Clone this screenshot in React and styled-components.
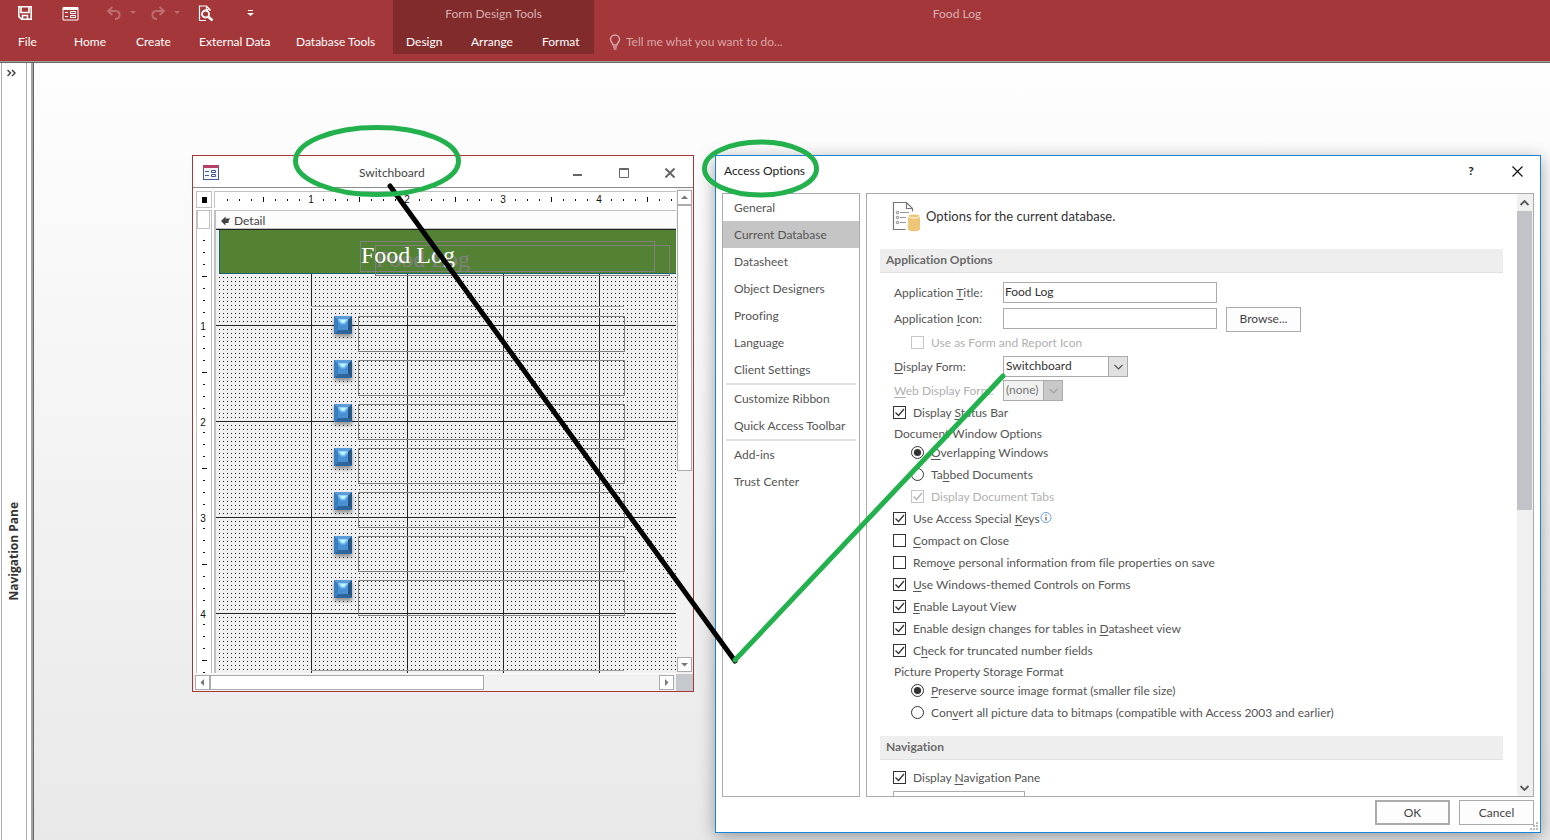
import styled, { createGlobalStyle, css } from "styled-components";

const GlobalStyle = createGlobalStyle`
  * {
    box-sizing: border-box;
  }

  body {
    margin: 0;
    font-family: Lato, "Open Sans", sans-serif;
    font-size: 12px;
    line-height: 16px;
    font-variant-ligatures: none;
    color: #444;
  }

  button, input, select {
    font: inherit;
    font-variant-ligatures: none;
    color: inherit;
  }
`;

const Page = styled.div`
  position: relative;
  display: flex;
  flex-direction: column;
  height: 100vh;
  min-height: 840px;
  overflow: hidden;
  background: #fff;
`;

/* ribbon */

const Ribbon = styled.header`
  display: flex;
  height: 63px;
  background: #a4373a;
  border-bottom: 1px solid #6b6b6b;
  box-shadow: inset 0 -1px #a09c9c;
  color: #fff;
`;

const RibbonBlock = styled.div`
  display: flex;
  flex-direction: column;
  flex: ${(p) => (p.$grow ? "1" : "none")};
  width: ${(p) => p.$width || "auto"};
`;

const ContextBlock = styled(RibbonBlock)`
  height: 54px;
  background: #812b2d;
`;

const TopRow = styled.div`
  display: flex;
  flex: none;
  align-items: center;
  height: 28px;
  color: #d9b0b1;
  justify-content: ${(p) => (p.$center ? "center" : "flex-start")};
  padding-right: ${(p) => (p.$center ? p.$inset || "0" : "0")};
`;

const QuickAccess = styled(TopRow)`
  height: 26px;
  margin-bottom: 2px;
  padding-left: 17px;
`;

const QuickButton = styled.button`
  display: flex;
  align-items: center;
  gap: 8px;
  width: ${(p) => p.$width};
  height: 24px;
  padding: 0;
  border: 0;
  background: none;
  color: ${(p) => (p.disabled ? "#bd6e70" : "#fff")};
`;

const TabRow = styled.nav`
  display: flex;
  flex: none;
  align-items: center;
  height: 28px;
  padding-left: ${(p) => p.$start};
`;

const Tab = styled.a`
  width: ${(p) => p.$width};
  color: #fff;
  white-space: nowrap;
  text-decoration: none;
`;

const TellMe = styled.label`
  display: flex;
  align-items: center;
  gap: 5px;
  height: 28px;
  padding-left: 15px;
  color: #d9a5a6;

  input {
    width: 240px;
    padding: 0;
    border: 0;
    outline: 0;
    background: none;
  }

  input::placeholder {
    color: #d9a5a6;
    opacity: 1;
  }
`;

/* work area */

const WorkArea = styled.div`
  display: flex;
  flex: 1;
`;

const NavPane = styled.aside`
  display: flex;
  flex-direction: column;
  justify-content: space-between;
  width: 26px;
  margin-left: 1px;
  padding: 3px 0 239px 2px;
  border: 1px solid #abadb3;
  border-width: 0 1px;
`;

const NavToggle = styled.button`
  display: flex;
  align-items: center;
  width: 16px;
  height: 14px;
  padding: 0 3px;
  border: 0;
  background: none;
`;

const NavTitle = styled.div`
  writing-mode: vertical-rl;
  transform: rotate(180deg);
  font-family: "Open Sans", sans-serif;
  font-weight: 700;
  line-height: 20px;
  color: #333;
`;

const Desktop = styled.main`
  position: relative;
  flex: 1;
  margin-left: 6px;
  border-left: 1px solid #666;
  box-shadow: -2px 0 #a0a3a7;
  background: linear-gradient(#fefefe, #e9e9e9);
`;

/* form design window */

const FormWindow = styled.section`
  position: absolute;
  left: 158px;
  top: 92px;
  display: flex;
  flex-direction: column;
  width: 502px;
  height: 537px;
  border: 1px solid #a4373a;
  background: #fff;
`;

const FormTitleBar = styled.div`
  display: flex;
  align-items: center;
  height: 32px;
  padding: 2px 0 0 10px;
  border-bottom: 1px solid #8c8c8c;

  h1 {
    flex: 1;
    margin: 0;
    padding-left: 140px;
    font-size: 12px;
    font-weight: 400;
  }
`;

const WindowButton = styled.button`
  display: flex;
  align-items: center;
  justify-content: center;
  width: 46px;
  height: 28px;
  padding: 0;
  border: 0;
  background: none;
  color: #222;
`;

const DesignArea = styled.div`
  display: grid;
  grid-template-columns: 1fr 17px;
  grid-template-rows: 1fr 17px;
  flex: 1;
  min-height: 0;
`;

const Designer = styled.div`
  display: grid;
  grid-template-columns: 16px 1fr;
  grid-template-rows: 17px 1fr;
  gap: 2px;
  padding: 3px 0 1px 3px;
  min-width: 0;
  min-height: 0;
`;

const RulerCorner = styled.button`
  display: flex;
  align-items: center;
  justify-content: center;
  padding: 0;
  border: 1px solid #c0c0c0;
  background: #fff;
`;

const Ruler = styled.div`
  overflow: hidden;
  border: 0 solid #c0c0c0;
  border-width: ${(p) => (p.$vertical ? "1px 1px 0" : "1px 0 0 1px")};

  svg {
    display: block;
  }
`;

const SectionPane = styled.div`
  display: flex;
  flex-direction: column;
  min-width: 0;
  border-top: 1px solid #c0c0c0;
  border-left: 2px solid #c0c0c0;
`;

const SectionBar = styled.div`
  display: flex;
  align-items: center;
  gap: 3px;
  height: 18px;
  padding: 2px 0 0 5px;
  border-bottom: 1px solid #c0c0c0;
  background: #fcfcfc;
`;

const Surface = styled.div`
  position: relative;
  flex: 1;
  overflow: hidden;
  border-top: 1px solid #222;
  background-color: #f0f0f0;
  background-image: linear-gradient(90deg, #222 1px, transparent 1px),
    linear-gradient(#222 1px, transparent 1px),
    conic-gradient(from 270deg at 1px 1px, #222 25%, transparent 0);
  background-size: 96px 96px, 96px 96px, 4px 4px;
  background-position: 95px 0, 0 95px, 3px 3px;
`;

const FormHeader = styled.div`
  position: absolute;
  left: 3px;
  right: 0;
  top: 0;
  height: 44px;
  border: 1px solid #17606f;
  border-width: 0 0 1px 1px;
  background: #538234;
`;

const Control = styled.div`
  position: absolute;
  left: ${(p) => p.$x}px;
  top: ${(p) => p.$y}px;
  width: ${(p) => p.$w}px;
  height: ${(p) => p.$h}px;
  border: 1px solid #808080;
`;

const TitleControl = styled(Control)`
  font-family: "Liberation Serif", serif;
  font-size: 24px;
  line-height: 26px;
  color: ${(p) => p.$color};
`;

const GroupOutline = styled(Control)`
  border-color: #999;
  border-width: 1px 0;
  box-shadow: inset 0 1px #fff;
`;

const BlueButton = styled.button`
  position: absolute;
  left: ${(p) => p.$x}px;
  top: ${(p) => p.$y}px;
  width: 18px;
  height: 18px;
  padding: 0;
  border: 0;
  background: none;
  box-shadow: 0 3px 4px rgba(0, 0, 0, 0.4);

  svg {
    display: block;
  }
`;

const ScrollTrack = styled.div`
  display: flex;
  flex-direction: ${(p) => (p.$vertical ? "column" : "row")};
  justify-content: space-between;
  padding: ${(p) => (p.$vertical ? "2px 1px 2px" : "1px 2px 1px")};
  background: #f2f2f2;
`;

const ScrollGroup = styled.div`
  display: flex;
  flex-direction: inherit;
`;

const ScrollButton = styled.button`
  display: flex;
  align-items: center;
  justify-content: center;
  width: 15px;
  height: 15px;
  padding: 0;
  border: 1px solid #ababab;
  background: #fff;
`;

const ScrollThumb = styled.div`
  width: ${(p) => (p.$vertical ? "15px" : "274px")};
  height: ${(p) => (p.$vertical ? "266px" : "15px")};
  border: 1px solid #ababab;
  background: #fff;
`;

const SizeCorner = styled.div`
  background: #c5c8cd;
`;

/* options dialog */

const Dialog = styled.section`
  position: absolute;
  left: 681px;
  top: 92px;
  display: flex;
  flex-direction: column;
  width: 826px;
  height: 678px;
  border: 1px solid #1883d7;
  background: #fff;
  box-shadow: 0 4px 16px rgba(0, 0, 0, 0.35);
`;

const DialogTitleBar = styled.div`
  display: flex;
  align-items: center;
  height: 30px;
  padding-left: 8px;
  margin-bottom: 7px;

  h2 {
    flex: 1;
    margin: 0;
    font-size: 12px;
    font-weight: 400;
    color: #222;
  }
`;

const DialogBody = styled.div`
  display: flex;
  gap: 6px;
  height: 604px;
  padding: 0 6px;
`;

const Categories = styled.nav`
  width: 138px;
  border: 1px solid #ababab;
`;

const Category = styled.a`
  display: flex;
  align-items: center;
  height: 27px;
  padding-left: 11px;
  color: #555;
  white-space: nowrap;
  text-decoration: none;
  background: ${(p) => (p.$active ? "#c5c5c5" : "none")};
`;

const Divider = styled.hr`
  height: 2px;
  margin: 0 3px;
  border: 0;
  background: #e1e1e1;
`;

const OptionsPane = styled.div`
  display: flex;
  flex: 1;
  overflow: hidden;
  border: 1px solid #ababab;
`;

const Options = styled.form`
  flex: 1;
  padding: 0 14px 0 13px;
  overflow: hidden;
`;

const Intro = styled.div`
  display: flex;
  align-items: center;
  gap: 5px;
  height: 44px;
  margin-bottom: 11px;
  padding-left: 12px;
  font-size: 13px;
  color: #333;
`;

const GroupTitle = styled.h3`
  height: 24px;
  margin: 0 0 7px;
  padding-left: 6px;
  border-bottom: 1px solid #e1e1e1;
  background: #eee;
  font-size: 12px;
  font-weight: 700;
  line-height: 22px;
  color: #6a6a6a;
`;

const Group = styled.div`
  padding-left: 13px;
  margin-bottom: 12px;
`;

const Row = styled.div`
  display: flex;
  align-items: center;
  height: ${(p) => (p.$tall ? "26px" : "22px")};
  padding-left: ${(p) => (p.$indent ? "18px" : "0")};
  color: ${(p) => (p.$muted ? "#b1b1b1" : "#555")};
  white-space: nowrap;

  u {
    text-underline-offset: 2px;
  }
`;

const FieldLabel = styled.label`
  width: 110px;
  padding-left: 1px;
`;

const Caption = styled.div`
  height: 18px;
  padding-left: 1px;
  line-height: 20px;
  color: #555;
`;

const field = css`
  height: 21px;
  margin: 0 0 1px;
  padding: 0 1px 2px;
  border: 1px solid #ababab;
  border-radius: 0;
  outline: 0;
  background: #fff;
  color: #333;
`;

const TextBox = styled.input`
  ${field}
  width: 214px;
`;

const SelectBox = styled.div`
  display: grid;
  grid-template-columns: 1fr 20px;
  width: ${(p) => p.$width};

  select {
    ${field}
    grid-area: 1 / 1 / 2 / 3;
    appearance: none;
    padding: 0 2px 2px;
    opacity: 1;
  }

  select:disabled {
    background: #f0f0f0;
    color: #777;
  }
`;

const SelectArrow = styled.span`
  z-index: 1;
  grid-area: 1 / 2;
  display: flex;
  align-items: center;
  justify-content: center;
  height: 21px;
  border: 1px solid #ababab;
  background: ${(p) => (p.$muted ? "#c8c8c8" : "#e1e1e1")};
  pointer-events: none;
`;

const PushButton = styled.button`
  width: 75px;
  height: 25px;
  padding: 0;
  border: ${(p) => (p.$primary ? "2px" : "1px")} solid #ababab;
  background: #fdfdfd;
  color: #444;
`;

const BrowseButton = styled(PushButton)`
  margin-left: 9px;
`;

const CheckLabel = styled.label`
  display: flex;
  align-items: center;
  gap: 7px;
`;

const Mark = styled.span`
  display: grid;
  width: 13px;
  height: 13px;
  margin-bottom: 1px;

  input {
    grid-area: 1 / 1;
    appearance: none;
    width: 13px;
    height: 13px;
    margin: 0;
    border: 1px solid #333;
    border-radius: ${(p) => (p.$round ? "50%" : "0")};
    background: #fff;
  }

  input:disabled {
    border-color: #c6c6c6;
  }

  svg {
    grid-area: 1 / 1;
    z-index: 1;
    pointer-events: none;
  }
`;

const Peek = styled.div`
  width: 132px;
  height: 20px;
  margin-top: 2px;
  border: 1px solid #ababab;
`;

const OptionsScroll = styled.div`
  display: flex;
  flex-direction: column;
  justify-content: space-between;
  width: 16px;
  background: #f0f0f0;
`;

const OptionsThumb = styled.div`
  width: 15px;
  height: 299px;
  background: #c2c3c9;
`;

const ArrowButton = styled.button`
  display: flex;
  align-items: center;
  justify-content: center;
  width: 15px;
  height: 17px;
  padding: 0;
  border: 0;
  background: none;
`;

const Footer = styled.div`
  display: flex;
  flex: 1;
  align-items: flex-start;
  justify-content: flex-end;
  gap: 9px;
  padding: 3px 6px 0;
`;

const Grip = styled.svg`
  position: absolute;
  right: 2px;
  bottom: 2px;
`;

const Markup = styled.svg`
  position: absolute;
  left: 0;
  top: 0;
  pointer-events: none;
`;

const tabs = [
  ["File", "56px"],
  ["Home", "62px"],
  ["Create", "63px"],
  ["External Data", "97px"],
  ["Database Tools", "auto"],
];

const contextTabs = [
  ["Design", "65px"],
  ["Arrange", "71px"],
  ["Format", "auto"],
];

const categories = [
  ["General", "Current Database", "Datasheet", "Object Designers", "Proofing", "Language", "Client Settings"],
  ["Customize Ribbon", "Quick Access Toolbar"],
  ["Add-ins", "Trust Center"],
];

const menuItems = [86, 130, 174, 218, 262, 306, 350];

/* "&" marks the access key, as in "&Display Form" */
const AccessText = ({ text }) => {
  const at = text.indexOf("&");
  if (at < 0) return <span>{text}</span>;
  return (
    <span>
      {text.slice(0, at)}
      <u>{text[at + 1]}</u>
      {text.slice(at + 2)}
    </span>
  );
};

const Check = ({ text, checked, disabled, indent, children }) => (
  <Row $indent={indent} $muted={disabled}>
    <CheckLabel>
      <Mark>
        <input type="checkbox" defaultChecked={checked} disabled={disabled} />
        {checked && (
          <svg width="13" height="13" fill="none" stroke={disabled ? "#b1b1b1" : "#333"} strokeWidth="1.3">
            <path d="M2.500 6.500 5.500 9.500 11 3" />
          </svg>
        )}
      </Mark>
      <AccessText text={text} />
    </CheckLabel>
    {children}
  </Row>
);

const Radio = ({ text, name, checked }) => (
  <Row $indent>
    <CheckLabel>
      <Mark $round>
        <input type="radio" name={name} defaultChecked={checked} />
        {checked && (
          <svg width="13" height="13">
            <circle cx="6.5" cy="6.5" r="3.6" fill="#333" />
          </svg>
        )}
      </Mark>
      <AccessText text={text} />
    </CheckLabel>
  </Row>
);

const Chevron = ({ up, color = "#555", width = 1.2 }) => (
  <svg width="9" height="6" fill="none" stroke={color} strokeWidth={width}>
    <path d={up ? "M.5 5 4.5 1l4 4" : "M.5 1l4 4 4-4"} />
  </svg>
);

const Triangle = ({ d }) => (
  <svg width="9" height="9" fill="#777">
    <path d={d} />
  </svg>
);

const Gem = () => (
  <svg width="18" height="18">
    <rect width="18" height="18" fill="#4a90d4" />
    <path d="M0 0h18l-4 4H4z" fill="#5b9ddb" />
    <path d="M18 0v18l-4-4V4z" fill="#245585" />
    <path d="M0 18h18l-4-4H4z" fill="#2d669c" />
    <path d="M0 0v18l4-4V4z" fill="#3b7dbd" />
    <path d="M4 3h10v2l-3 3.500H7L4 5z" fill="#72bcee" />
    <path d="M5 3.500h8L10 7H8z" fill="#bdf3ff" />
  </svg>
);

const HorizontalRuler = () => (
  <svg width="462" height="16" fill="#111" fontFamily="Liberation Sans, sans-serif" fontSize="10">
    {Array.from({ length: 38 }, (_, i) => i + 1).map((i) => {
      const x = i * 12;
      if (i % 8 === 0) {
        return (
          <text key={i} x={x} y="11" textAnchor="middle">
            {i / 8}
          </text>
        );
      }
      return i % 4 === 0 ? (
        <rect key={i} x={x} y="5" width="1" height="5" />
      ) : (
        <rect key={i} x={x} y="7" width="1" height="2" />
      );
    })}
  </svg>
);

const VerticalRuler = () => (
  <svg width="14" height="462" fill="#111" fontFamily="Liberation Sans, sans-serif" fontSize="10">
    <path d="M.5 0v17.500h12V0" fill="none" stroke="#c0c0c0" />
    {Array.from({ length: 37 }, (_, i) => i + 1).map((i) => {
      const y = 17 + i * 12;
      if (i % 8 === 0) {
        return (
          <text key={i} x="6" y={y + 6} textAnchor="middle">
            {i / 8}
          </text>
        );
      }
      return i % 4 === 0 ? (
        <rect key={i} x="5" y={y} width="5" height="1" />
      ) : (
        <rect key={i} x="6" y={y} width="2" height="1" />
      );
    })}
  </svg>
);

const AppRibbon = () => (
  <Ribbon>
    <RibbonBlock $width="393px">
      <QuickAccess>
        <QuickButton $width="45px" aria-label="Save">
          <svg width="16" height="16" fill="none" stroke="#fff" strokeWidth="1.600">
            <path d="M1.800 1.800h12.400v12.400H4.500l-2.700-2.500z" />
            <path d="M4 2v5.500h8V2M5.500 14v-3.500h5V14" />
          </svg>
        </QuickButton>
        <QuickButton $width="44px" aria-label="Form view">
          <svg width="17" height="15" fill="none" stroke="#fff">
            <path d="M1 1.500h15v12.500H1z" />
            <path d="M1 2.500h15" strokeWidth="3" />
            <path d="M3 6.500h3M3 10.500h3M8.500 5.500h5v2h-5zM8.500 9.500h5v2h-5z" />
          </svg>
        </QuickButton>
        <QuickButton $width="44px" disabled aria-label="Undo">
          <svg width="16" height="14" fill="none" stroke="currentColor" strokeWidth="2">
            <path d="M6.500 1 2 5l4.500 4M2.500 5H10c5 0 5 8-1 8" />
          </svg>
          <svg width="6" height="4" fill="currentColor">
            <path d="M0 0h6L3 3z" />
          </svg>
        </QuickButton>
        <QuickButton $width="47px" disabled aria-label="Redo">
          <svg width="16" height="14" fill="none" stroke="currentColor" strokeWidth="2">
            <path d="M9.500 1 14 5 9.500 9M13.500 5H6c-5 0-5 8 1 8" />
          </svg>
          <svg width="6" height="4" fill="currentColor">
            <path d="M0 0h6L3 3z" />
          </svg>
        </QuickButton>
        <QuickButton $width="50px" aria-label="Print preview">
          <svg width="17" height="17" fill="none" stroke="#fff">
            <path d="M13 6V4.500L9.500 1H2.500v14.500H9M9.500 1v3.500H13" strokeWidth="1.200" />
            <circle cx="8.500" cy="9" r="3.500" strokeWidth="1.800" />
            <path d="m11 11.500 4.500 4" strokeWidth="2.400" />
          </svg>
        </QuickButton>
        <QuickButton $width="12px" aria-label="Customize quick access toolbar">
          <svg width="7" height="7" fill="#fff">
            <path d="M1 0h5v1H1zM0 3h7L3.500 6z" />
          </svg>
        </QuickButton>
      </QuickAccess>
      <TabRow $start="18px">
        {tabs.map(([name, width]) => (
          <Tab key={name} href="#" $width={width}>
            {name}
          </Tab>
        ))}
      </TabRow>
    </RibbonBlock>
    <ContextBlock $width="201px">
      <TopRow $center>Form Design Tools</TopRow>
      <TabRow $start="13px">
        {contextTabs.map(([name, width]) => (
          <Tab key={name} href="#" $width={width}>
            {name}
          </Tab>
        ))}
      </TabRow>
    </ContextBlock>
    <RibbonBlock $grow>
      <TopRow $center $inset="230px">
        Food Log
      </TopRow>
      <TellMe>
        <svg width="12" height="16" fill="none" stroke="currentColor" strokeWidth="1.500">
          <path d="M4 11c0-2-2.500-3-2.500-5.500a4.500 4.500 0 0 1 9 0C10.500 8 8 9 8 11zM4 13h4M4.500 15h3" />
        </svg>
        <input placeholder="Tell me what you want to do..." />
      </TellMe>
    </RibbonBlock>
  </Ribbon>
);

const Switchboard = () => (
  <FormWindow>
    <FormTitleBar>
      <svg width="16" height="15">
        <rect x=".5" y=".5" width="15" height="14" fill="#f4f7fb" stroke="#44598c" />
        <rect width="16" height="3" fill="#b83f66" />
        <path d="M2 6.500h4M2 10.500h4M8.500 5.500h4v2h-4zM8.500 9.500h4v2h-4z" fill="none" stroke="#44598c" />
      </svg>
      <h1>Switchboard</h1>
      <WindowButton aria-label="Minimize">
        <svg width="10" height="10" fill="#666">
          <path d="M0 6h9v2H0z" />
        </svg>
      </WindowButton>
      <WindowButton aria-label="Maximize">
        <svg width="11" height="10" fill="none" stroke="#666">
          <path d="M.5.500h9v9h-9zM0 1.500h10" />
        </svg>
      </WindowButton>
      <WindowButton aria-label="Close form">
        <svg width="10" height="10" stroke="#666" strokeWidth="2">
          <path d="m.5.500 9 9m0-9-9 9" />
        </svg>
      </WindowButton>
    </FormTitleBar>
    <DesignArea>
      <Designer>
        <RulerCorner aria-label="Select form">
          <svg width="5" height="6">
            <rect width="5" height="6" />
          </svg>
        </RulerCorner>
        <Ruler>
          <HorizontalRuler />
        </Ruler>
        <Ruler $vertical>
          <VerticalRuler />
        </Ruler>
        <SectionPane>
          <SectionBar>
            <svg width="10" height="10" fill="#444">
              <path d="M0 5 4.500.5v2H9.500C7.500 4 7.500 5 7.500 7h-3v2.500z" />
            </svg>
            Detail
          </SectionBar>
          <Surface>
            <FormHeader />
            <TitleControl $x={159} $y={15} $w={295} $h={31} $color="#808080">
              Food Log
            </TitleControl>
            <TitleControl $x={144} $y={11} $w={295} $h={31} $color="#fff">
              Food Log
            </TitleControl>
            <GroupOutline $x={95} $y={76} $w={313} $h={365} />
            {menuItems.map((y) => (
              <Control key={y} $x={142} $y={y} $w={267} $h={36} />
            ))}
            {menuItems.map((y) => (
              <BlueButton key={y} $x={118} $y={y} aria-label="Menu item">
                <Gem />
              </BlueButton>
            ))}
          </Surface>
        </SectionPane>
      </Designer>
      <ScrollTrack $vertical>
        <ScrollGroup>
          <ScrollButton aria-label="Scroll up">
            <Triangle d="M1 6h7L4.500 2.500z" />
          </ScrollButton>
          <ScrollThumb $vertical />
        </ScrollGroup>
        <ScrollButton aria-label="Scroll down">
          <Triangle d="M1 3h7L4.500 6.500z" />
        </ScrollButton>
      </ScrollTrack>
      <ScrollTrack>
        <ScrollGroup>
          <ScrollButton aria-label="Scroll left">
            <Triangle d="M6 1v7L2.500 4.500z" />
          </ScrollButton>
          <ScrollThumb />
        </ScrollGroup>
        <ScrollButton aria-label="Scroll right">
          <Triangle d="M3 1v7l3.500-3.500z" />
        </ScrollButton>
      </ScrollTrack>
      <SizeCorner />
    </DesignArea>
  </FormWindow>
);

const AccessOptions = () => (
  <Dialog>
    <DialogTitleBar>
      <h2>Access Options</h2>
      <WindowButton aria-label="Help">
        <b>?</b>
      </WindowButton>
      <WindowButton aria-label="Close options">
        <svg width="11" height="11" stroke="#111" strokeWidth="1.200">
          <path d="m.5.500 10 10m0-10-10 10" />
        </svg>
      </WindowButton>
    </DialogTitleBar>
    <DialogBody>
      <Categories>
        {categories.map((names, i) => (
          <div key={i}>
            {i > 0 && <Divider />}
            {names.map((name) => (
              <Category key={name} href="#" $active={name === "Current Database"}>
                {name}
              </Category>
            ))}
          </div>
        ))}
      </Categories>
      <OptionsPane>
        <Options onSubmit={(e) => e.preventDefault()}>
          <Intro>
            <svg width="29" height="31" fill="none" stroke="#777">
              <path d="M13.500 28.500H1.500V1.500h13l6 6v3M14.500 1.500v6h6" strokeWidth="1.200" />
              <path d="M8 11.500h9M8 16.500h6M8 21.500h6" stroke="#999" />
              <circle cx="5.500" cy="11.500" r="1.200" />
              <circle cx="5.500" cy="16.500" r="1.200" />
              <circle cx="5.500" cy="21.500" r="1.200" />
              <path d="M16 15v13c0 3 12 3 12 0V15z" fill="#efc577" stroke="none" />
              <ellipse cx="22" cy="15" rx="6" ry="2" fill="#efc577" stroke="#fff" />
            </svg>
            Options for the current database.
          </Intro>
          <GroupTitle>Application Options</GroupTitle>
          <Group>
            <Row $tall>
              <FieldLabel htmlFor="title">
                <AccessText text="Application &Title:" />
              </FieldLabel>
              <TextBox id="title" defaultValue="Food Log" />
            </Row>
            <Row $tall>
              <FieldLabel htmlFor="icon">
                <AccessText text="Application &Icon:" />
              </FieldLabel>
              <TextBox id="icon" />
              <BrowseButton type="button">Browse...</BrowseButton>
            </Row>
            <Check text="Use as Form and Report Icon" disabled indent />
            <Row $tall>
              <FieldLabel htmlFor="form">
                <AccessText text="&Display Form:" />
              </FieldLabel>
              <SelectBox $width="125px">
                <select id="form">
                  <option>Switchboard</option>
                </select>
                <SelectArrow>
                  <Chevron />
                </SelectArrow>
              </SelectBox>
            </Row>
            <Row $muted>
              <FieldLabel htmlFor="webform">
                <AccessText text="&Web Display Form:" />
              </FieldLabel>
              <SelectBox $width="60px">
                <select id="webform" disabled>
                  <option>(none)</option>
                </select>
                <SelectArrow $muted>
                  <Chevron color="#a0a0a0" />
                </SelectArrow>
              </SelectBox>
            </Row>
            <Check text="Display &Status Bar" checked />
            <Caption>Document Window Options</Caption>
            <Radio text="&Overlapping Windows" name="windows" checked />
            <Radio text="Ta&bbed Documents" name="windows" />
            <Check text="Display Document Tabs" checked disabled indent />
            <Check text="Use Access Special &Keys" checked>
              <svg width="12" height="14" fill="none" stroke="#6f9bd8">
                <circle cx="6" cy="5.500" r="5" />
                <path d="M6 2.500v1.200M6 5v3.500" stroke="#335" />
              </svg>
            </Check>
            <Check text="&Compact on Close" />
            <Check text="Remo&ve personal information from file properties on save" />
            <Check text="&Use Windows-themed Controls on Forms" checked />
            <Check text="&Enable Layout View" checked />
            <Check text="Enable design changes for tables in &Datasheet view" checked />
            <Check text="C&heck for truncated number fields" checked />
            <Caption>Picture Property Storage Format</Caption>
            <Radio text="&Preserve source image format (smaller file size)" name="picture" checked />
            <Radio text="Con&vert all picture data to bitmaps (compatible with Access 2003 and earlier)" name="picture" />
          </Group>
          <GroupTitle>Navigation</GroupTitle>
          <Group>
            <Check text="Display &Navigation Pane" checked />
            <Peek />
          </Group>
        </Options>
        <OptionsScroll>
          <div>
            <ArrowButton aria-label="Scroll options up">
              <Chevron up width={1.8} />
            </ArrowButton>
            <OptionsThumb />
          </div>
          <ArrowButton aria-label="Scroll options down">
            <Chevron width={1.8} />
          </ArrowButton>
        </OptionsScroll>
      </OptionsPane>
    </DialogBody>
    <Footer>
      <PushButton $primary>OK</PushButton>
      <PushButton>Cancel</PushButton>
    </Footer>
    <Grip width="8" height="8" fill="#bbb">
      <path d="M6 0h2v2H6zM3 3h2v2H3zM6 3h2v2H6zM0 6h2v2H0zM3 6h2v2H3zM6 6h2v2H6z" />
    </Grip>
  </Dialog>
);

const App = () => {
  return (
    <Page>
      <GlobalStyle />
      <AppRibbon />
      <WorkArea>
        <NavPane>
          <NavToggle aria-label="Open navigation pane">
            <svg width="9" height="8" fill="none" stroke="#444" strokeWidth="1.500">
              <path d="m.5 1 3 3-3 3M5 1l3 3-3 3" />
            </svg>
          </NavToggle>
          <NavTitle>Navigation Pane</NavTitle>
        </NavPane>
        <Desktop>
          <Switchboard />
          <AccessOptions />
        </Desktop>
      </WorkArea>
      <Markup width="1550" height="840" fill="none" strokeWidth="5" strokeLinecap="round">
        <path d="m390 186 345 475" stroke="#000" />
        <path d="M735 660 1003 376" stroke="#22b14c" />
        <ellipse cx="377" cy="161" rx="81.500" ry="33.500" stroke="#22b14c" />
        <ellipse cx="760.500" cy="168.500" rx="56" ry="26.500" stroke="#22b14c" />
      </Markup>
    </Page>
  );
};

export default App;
